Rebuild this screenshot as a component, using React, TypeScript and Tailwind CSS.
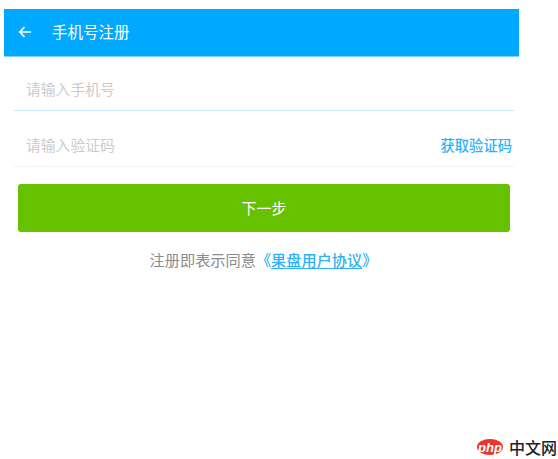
import React from 'react';

const CJK = 'font-["Noto_Sans_CJK_SC","Liberation_Sans",sans-serif]';

const Watermark: React.FC = () => (
  <div className="absolute right-[1px] bottom-[3px] flex items-center">
    <div className="flex h-[16px] w-[26px] items-center justify-center rounded-[50%] bg-[#e8352e]">
      <span className="font-['Liberation_Sans',sans-serif] text-[13px] leading-none font-bold text-white italic">php</span>
    </div>
    <span className={`${CJK} ml-[6px] text-[16px] leading-[18px] font-medium whitespace-nowrap text-[#222]`}>中文网</span>
  </div>
);

export default function App() {
  return (
    <div className={`${CJK} relative h-[459px] w-[558px] overflow-hidden bg-white pt-[9px] pl-[4px]`}>
      <div className="w-[515px]">
        <header className="flex h-[48px] items-center border-b border-[#7fd3ff] bg-[#00a8ff] pb-[1px] pl-[14px] text-white">
          <svg width="14" height="12" viewBox="0 0 14 12" fill="none" stroke="currentColor" strokeWidth="1.7">
            <path d="M13 6H2M6.5 1.2 1.8 6l4.7 4.8" />
          </svg>
          <h1 className="ml-[20px] text-[15.5px] leading-none">手机号注册</h1>
        </header>

        <div className="ml-[10px] w-[500px]">
          <div className="flex h-[54px] items-end border-b border-[#c9e9fb] pb-[10px] pl-[12px] text-[14.8px] leading-[22px] text-[#cccccc]">
            <span>请输入手机号</span>
          </div>
          <div className="flex h-[56px] items-end justify-between border-b border-[#f2f2f2] pb-[10px] pl-[12px] text-[14.8px] leading-[22px]">
            <span className="text-[#cccccc]">请输入验证码</span>
            <span className="pr-[2px] text-[14.3px] font-medium text-[#2eb2f5]">获取验证码</span>
          </div>
        </div>

        <button className="mt-[17px] ml-[14px] flex h-[48px] w-[492px] items-center justify-center rounded-[3px] bg-[#66c200] text-[15px] text-white">
          下一步
        </button>

        <p className="mt-[16px] pl-[4px] text-center text-[15.2px] leading-[22px] text-[#8c8c8c] [text-spacing-trim:space-all]">
          注册即表示同意
          <span className="font-medium text-[#2eb2f5]">
            《<span className="underline underline-offset-2">果盘用户协议</span>》
          </span>
        </p>
      </div>
      <Watermark />
    </div>
  );
}
